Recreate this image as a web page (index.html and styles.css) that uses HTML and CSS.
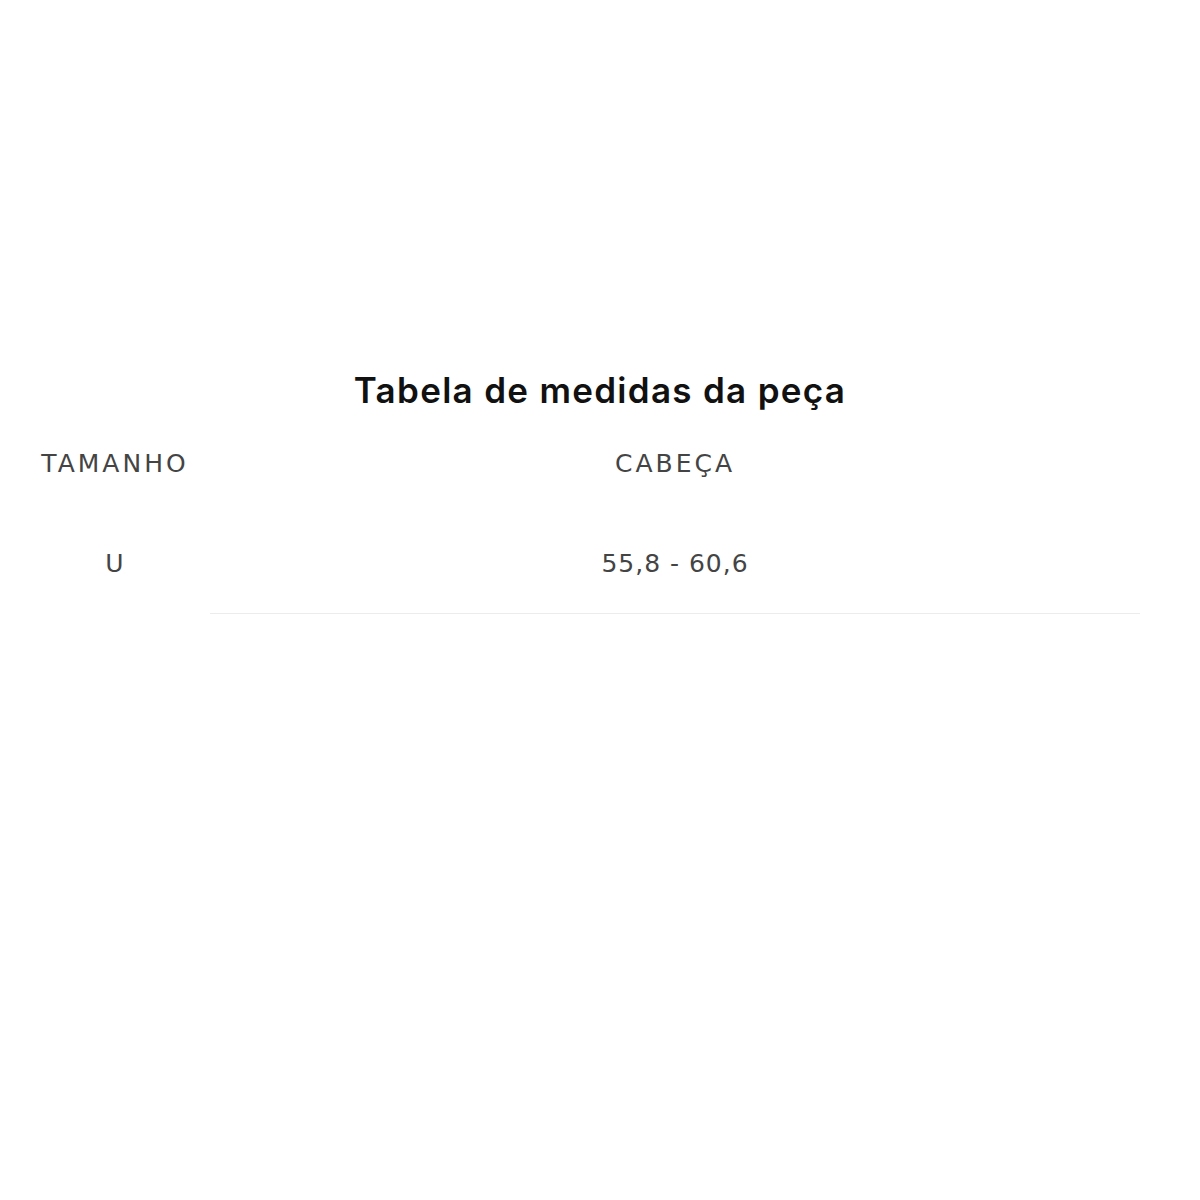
FILE: index.html
```html
<!DOCTYPE html>
<html lang="pt-BR">
<head>
    <meta charset="UTF-8">
    <meta name="viewport" content="width=device-width, initial-scale=1.0">
    <title>Tabela de medidas da peça</title>
    <link rel="stylesheet" href="styles.css">
</head>
<body>
    <div class="size-chart">
        <h1 class="chart-title">Tabela de medidas da peça</h1>
        <table class="chart-table">
            <thead>
                <tr>
                    <th class="col-size">TAMANHO</th>
                    <th class="col-measure">CABEÇA</th>
                </tr>
            </thead>
            <tbody>
                <tr>
                    <td class="col-size">U</td>
                    <td class="col-measure">55,8 - 60,6</td>
                </tr>
            </tbody>
        </table>
    </div>
</body>
</html>
```

FILE: styles.css
```css
body {
    margin: 0;
    background: #fff;
    font-family: "DejaVu Sans", sans-serif;
}
.size-chart {
    padding-top: 370px;
}
.chart-title {
    margin: 0;
    text-align: center;
    font-family: Inter, "DejaVu Sans", sans-serif;
    font-size: 35px;
    line-height: 40px;
    letter-spacing: 1.3px;
    font-weight: 600;
    color: #111;
}
.chart-table {
    margin: 3px 0 0 20px;
    width: 1120px;
    border-collapse: collapse;
    table-layout: fixed;
}
.chart-table th,
.chart-table td {
    height: 100px;
    padding: 0;
    text-align: center;
    vertical-align: middle;
    font-size: 25px;
    font-weight: normal;
    color: #444;
}
.chart-table th {
    letter-spacing: 3px;
}
.chart-table td {
    letter-spacing: 1px;
}
.col-size {
    width: 190px;
}
.chart-table td.col-measure {
    border-bottom: 1px solid #ececec;
}
```
